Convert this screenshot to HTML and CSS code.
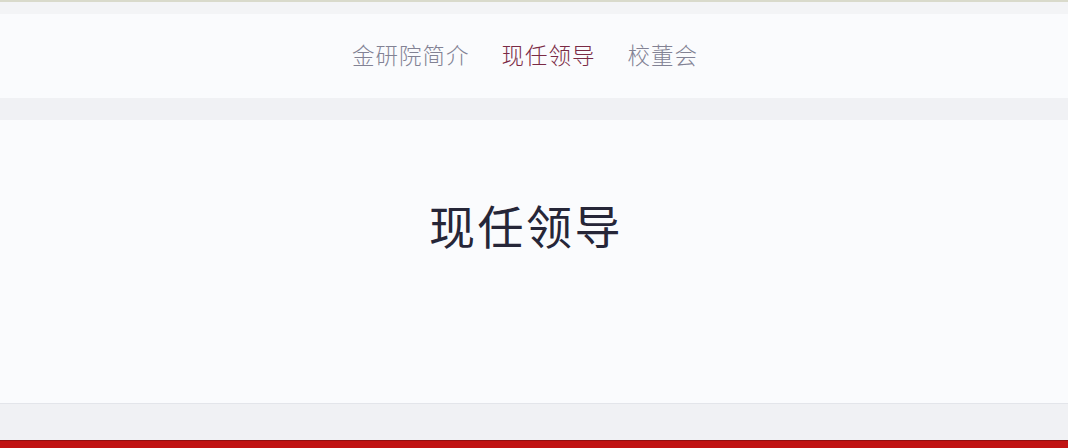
FILE: index.html
```html
<!DOCTYPE html>
<html lang="zh">
<head>
<meta charset="utf-8">
<title>现任领导</title>
<link rel="stylesheet" href="styles.css">
</head>
<body>
<div class="topline"></div>
<div class="band-top"></div>
<nav class="nav">
  <a class="nav-item">金研院简介</a>
  <a class="nav-item active">现任领导</a>
  <a class="nav-item">校董会</a>
</nav>
<div class="band"></div>
<main class="hero">
  <h1 class="title">现任领导</h1>
</main>
<div class="band-bottom"></div>
<div class="redbar"></div>
</body>
</html>
```

FILE: styles.css
```css
html, body {
  margin: 0;
  padding: 0;
}
body {
  width: 1068px;
  height: 448px;
  overflow: hidden;
  background: #fafbfd;
  font-family: "Noto Sans CJK SC", "Noto Sans", sans-serif;
  display: flex;
  flex-direction: column;
}
.topline {
  height: 2px;
  background: #d9dacb;
}
.band-top {
  height: 12px;
  background: #f3f4f6;
}
.nav {
  height: 84px;
  background: #fafbfd;
  display: flex;
  justify-content: center;
  align-items: center;
  gap: 32px;
  padding-right: 18px;
  padding-bottom: 4px;
  box-sizing: border-box;
}
.nav-item {
  font-size: 22.5px;
  font-weight: 300;
  color: #828294;
  letter-spacing: 1px;
  line-height: 1;
}
.nav-item.active {
  color: #7a2a45;
  font-weight: 300;
}
.band {
  height: 22px;
  background: #f0f1f4;
}
.hero {
  height: 283px;
  background: #fafbfd;
  display: flex;
  justify-content: center;
  align-items: flex-start;
  padding-right: 16px;
  box-sizing: border-box;
}
.title {
  margin: 81px 0 0 0;
  font-size: 46px;
  font-weight: 400;
  color: #262638;
  letter-spacing: 2.5px;
  line-height: 1;
}
.band-bottom {
  height: 37px;
  background: #f0f1f4;
  border-top: 1px solid #e3e5ea;
  box-sizing: border-box;
}
.redbar {
  height: 8px;
  background: #c01212;
  border-top: 1px solid #8f1010;
  box-sizing: border-box;
}
```
